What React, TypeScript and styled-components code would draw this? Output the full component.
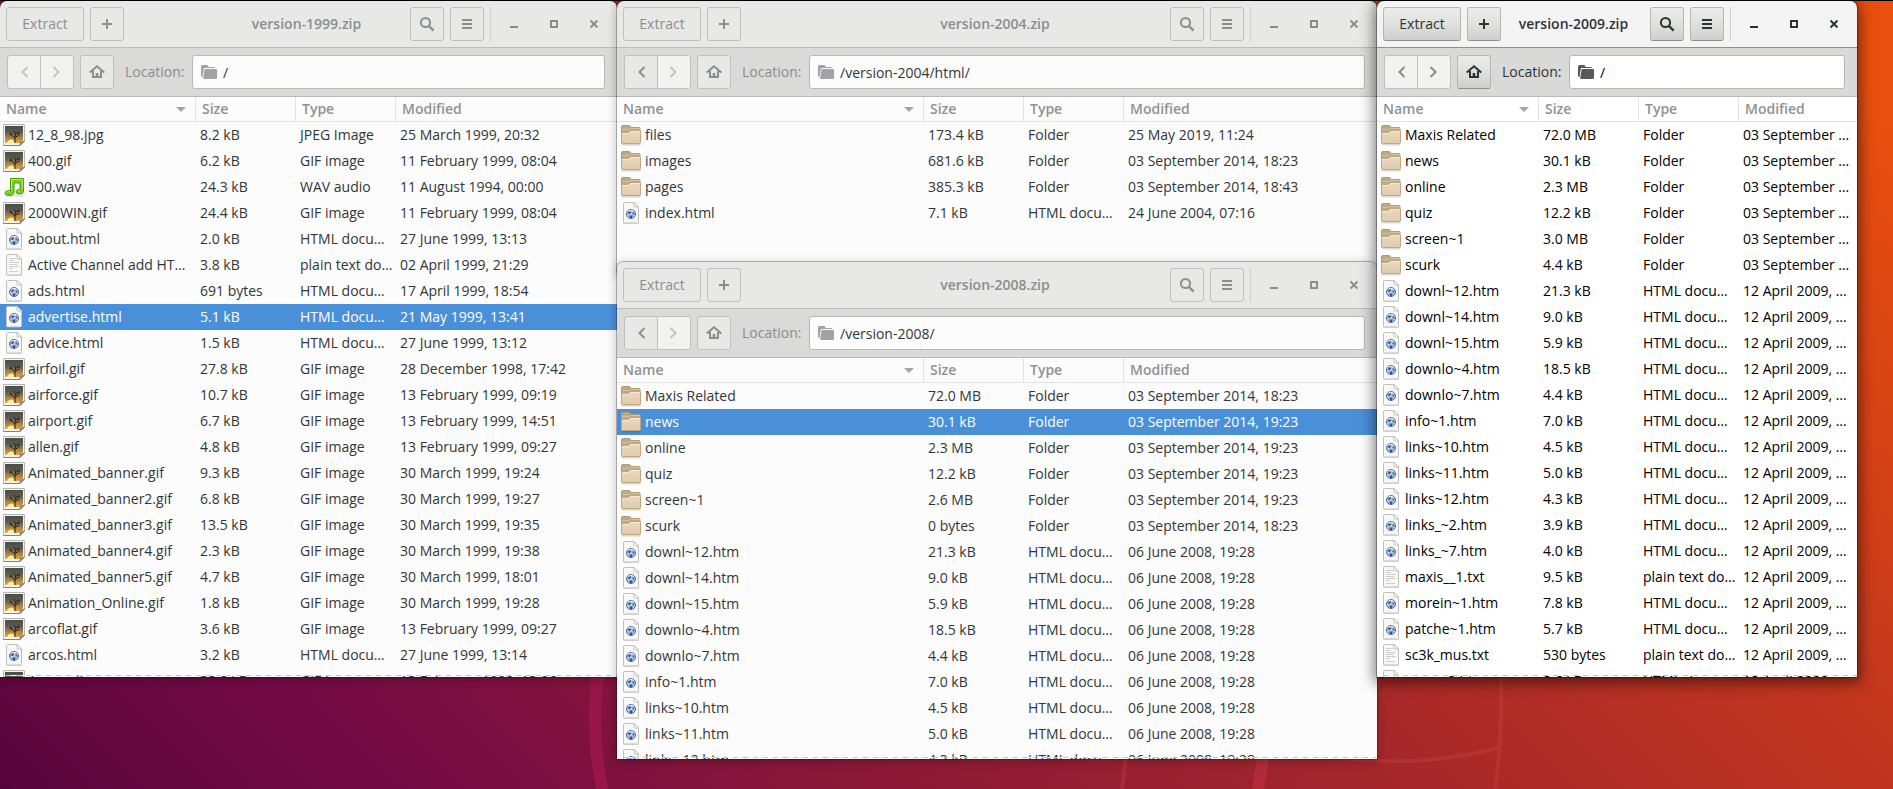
import React, { useId } from "react";
import styled, { createGlobalStyle, css } from "styled-components";

type FileKind = "folder" | "html" | "image" | "audio" | "text";
type FileRow = [FileKind, string, string, string, string];

const GlobalStyle = createGlobalStyle`
  * { box-sizing: border-box; }
  body {
    margin: 0;
    font-family: "Open Sans", "Noto Sans", sans-serif;
    font-size: 14px;
    line-height: 20px;
    overflow: hidden;
  }
  button, input { font: inherit; color: inherit; }
`;

/* ---------- desktop ---------- */

const Desktop = styled.main`
  position: relative;
  min-height: 100vh;
  overflow: hidden;
  border-top: 1px solid #000;
  display: grid;
  grid-template-columns: 617fr 760fr 480fr;
  align-items: start;
  padding-right: 36px;
  background: linear-gradient(
    45deg,
    #56053a 0%,
    #730a45 14%,
    #82133c 26%,
    #a3262c 51%,
    #be3420 70%,
    #d94414 85%,
    #e94f0f 96%
  );
`;

const Wallpaper = styled.svg`
  position: absolute;
  inset: 0;
  width: 100%;
  height: 100%;
`;

/* The later window of a stack lies over the foot of the one before it. */
const Stack = styled.div`
  display: flex;
  flex-direction: column;
  min-width: 0;
  & > * + * {
    margin-top: -10px;
  }
`;

/* ---------- window ---------- */

const Frame = styled.section<{ $active: boolean }>`
  position: relative;
  min-width: 0;
  border-radius: 7px 7px 0 0;
  color: ${(p) => (p.$active ? "#2e3436" : "#8b8e8f")};
  box-shadow: ${(p) =>
    p.$active
      ? "0 0 0 1px rgba(0,0,0,.3), 0 3px 14px 3px rgba(0,0,0,.5)"
      : "0 0 0 1px rgba(0,0,0,.25), 0 2px 8px 2px rgba(0,0,0,.2)"};
`;

const TitleBar = styled.header<{ $active: boolean }>`
  display: flex;
  align-items: center;
  padding: 6px;
  border-radius: 7px 7px 0 0;
  border-bottom: 1px solid ${(p) => (p.$active ? "#90918c" : "#bcbcb9")};
  background: ${(p) => (p.$active ? "#f4f4f4" : "#e8e8e7")};
`;

const BarGroup = styled.div<{ $end?: boolean }>`
  display: flex;
  flex: 1 0 0;
  min-width: max-content;
  gap: 6px;
  justify-content: ${(p) => (p.$end ? "flex-end" : "flex-start")};
`;

const Title = styled.h1`
  margin: 0;
  padding: 0 22px 0 18px;
  flex: 0 1 auto;
  display: flex;
  justify-content: center;
  min-width: 0;
  white-space: nowrap;
  font-size: 14px;
  font-weight: 600;
`;

const Divider = styled.span`
  width: 1px;
  background: #cfcfcd;
`;

const Button = styled.button<{ $active: boolean; $wide?: boolean }>`
  display: inline-flex;
  align-items: center;
  justify-content: center;
  width: ${(p) => (p.$wide ? "78px" : "34px")};
  height: 34px;
  padding: 0;
  border: 1px solid #bfbfbc;
  border-radius: 3px;
  background: #e8e8e7;
  ${(p) =>
    p.$active &&
    css`
      border-color: #b6b6b3 #b6b6b3 #91918c;
      background: linear-gradient(#ececeb, #e0e0de 50%, #cfcfcc);
    `}
  &:disabled {
    border-color: #bfbfbc;
    background: #f2f2f1;
    color: ${(p) => (p.$active ? "#8b8e8f" : "#c3c4c3")};
  }
`;

const FlatButton = styled.button`
  display: inline-flex;
  align-items: center;
  justify-content: center;
  width: 34px;
  height: 34px;
  padding: 0;
  border: 0;
  background: none;
`;

const LocationBar = styled.div<{ $active: boolean }>`
  display: flex;
  align-items: center;
  padding: 7px 12px 7px 7px;
  border-bottom: 1px solid #b9b9b6;
  background: ${(p) => (p.$active ? "#d9d9d7" : "#dadad8")};
`;

const Linked = styled.div`
  display: flex;
  margin-right: 6px;
  & > :first-child {
    border-radius: 3px 0 0 3px;
  }
  & > :last-child {
    margin-left: -1px;
    border-radius: 0 3px 3px 0;
  }
`;

const LocationLabel = styled.label`
  flex: none;
  width: 78px;
  padding-left: 11px;
`;

const Entry = styled.div`
  position: relative;
  flex: 1;
  min-width: 0;
  & > svg {
    position: absolute;
    left: 9px;
    top: 9px;
  }
`;

const EntryInput = styled.input<{ $active: boolean }>`
  display: block;
  width: 100%;
  height: 34px;
  padding: 0 8px 0 30px;
  border: 1px solid #b9b9b6;
  border-radius: 3px;
  outline: 0;
  background: ${(p) => (p.$active ? "#fff" : "#fcfcfc")};
  color: ${(p) => (p.$active ? "#000" : "#323636")};
`;

/* ---------- file list ---------- */

const ListView = styled.div<{ $active: boolean; $height: number }>`
  position: relative;
  height: ${(p) => p.$height}px;
  overflow: hidden;
  background: ${(p) => (p.$active ? "#fff" : "#fcfcfc")};
  color: ${(p) => (p.$active ? "#000" : "#323636")};
`;

const Undershoot = styled.div`
  position: absolute;
  left: 6px;
  right: 0;
  bottom: 1px;
  height: 1px;
  background: repeating-linear-gradient(90deg, #c4c4c8 0 5px, #fcfcfc 5px 10px);
`;

const Table = styled.table`
  width: 100%;
  table-layout: fixed;
  border-collapse: separate;
  border-spacing: 0;
`;

const NameCol = styled.col<{ $width: number }>`
  width: ${(p) => p.$width}px;
`;

const FixedCol = styled.col`
  width: 100px;
`;

const HeadCell = styled.th`
  height: 25px;
  padding: 0 6px;
  border-bottom: 1px solid #e3e3e2;
  text-align: left;
  font-weight: 600;
  color: #8f9292;
  white-space: nowrap;
  &:not(:last-child) {
    border-right: 1px solid #e3e3e2;
  }
`;

const SortHead = styled.span`
  display: flex;
  align-items: center;
  justify-content: space-between;
  padding-right: 3px;
`;

const Row = styled.tr<{ $selected: boolean }>`
  ${(p) =>
    p.$selected &&
    css`
      background: #4a90d9;
      color: #fff;
    `}
`;

const Cell = styled.td`
  height: 26px;
  padding: 0 0 0 4px;
  overflow: hidden;
  white-space: nowrap;
`;

const NameCell = styled(Cell)`
  padding-left: 3px;
`;

const FileName = styled.span`
  display: flex;
  align-items: center;
  gap: 3px;
  & > svg {
    flex: none;
  }
`;

/* ---------- symbolic icons ---------- */

const Symbol = ({ children }: { children: React.ReactNode }) => (
  <svg width="16" height="16" viewBox="0 0 16 16" fill="none" stroke="currentColor" strokeWidth="2" aria-hidden>
    {children}
  </svg>
);

const AddIcon = () => <Symbol><path d="M8 3v10M3 8h10" /></Symbol>;
const SearchIcon = () => (
  <Symbol><circle cx="6.5" cy="6.5" r="4.6" /><path d="M10 10l4.6 4.6" strokeWidth="2.4" /></Symbol>
);
const MenuIcon = () => <Symbol><path d="M3 4h10M3 8h10M3 12h10" /></Symbol>;
const MinimizeIcon = () => <Symbol><path d="M4 11h8" /></Symbol>;
const MaximizeIcon = () => <Symbol><path d="M5 5h6v6H5z" /></Symbol>;
const CloseIcon = () => <Symbol><path d="M4.5 4.5l7 7M11.5 4.5l-7 7" /></Symbol>;
const BackIcon = () => <Symbol><path d="M11.5 3L6.5 8l5 5" /></Symbol>;
const ForwardIcon = () => <Symbol><path d="M4.5 3l5 5-5 5" /></Symbol>;
const HomeIcon = () => (
  <Symbol>
    <path d="M.7 8.6L8 2.3l7.3 6.3" />
    <path d="M4 7v6h8V7" />
    <path d="M8 13.5V9" strokeWidth="2.6" />
  </Symbol>
);
const PlaceIcon = ({ active }: { active: boolean }) => (
  <svg width="16" height="16" viewBox="0 0 16 16" fill={active ? "#555b5c" : "#a0a2a3"} aria-hidden>
    <path d="M0 2.5Q0 1 1.5 1H6q1 0 1.2 1l.3 1H13q1 0 1 1H4Q3 4 2.8 5L1.5 13Q0 13 0 11.500z" />
    <path d="M4.500 5H15q1 0 1 1v7.500q0 1.500-1.500 1.500H3q-1 0-.8-1L3.500 6q.1-1 1-1z" />
  </svg>
);
const SortIcon = () => (
  <svg width="10" height="5" viewBox="0 0 10 5" fill="#a4a6a6" aria-hidden><path d="M0 0h10L5 5z" /></svg>
);

/* ---------- file type icons ---------- */

const FolderIcon = () => (
  <>
    <path d="M2 20.500h18.500" stroke="#000" strokeOpacity=".15" strokeWidth="2" />
    <path d="M1.500 19V3q0-1.500 1.500-1.500h6q1 0 1.300.8l.5 1.200H19q1 0 1 1V19z" fill="#bda983" stroke="#b49c72" />
    <path d="M2.500 5.500h6l2-1h9" stroke="#d3c4a3" fill="none" />
    <path d="M1.500 9.500q0-1 1-1h5q1 0 1.600-.8l.6-.6q.4-.6 1.300-.6h8.500q1 0 1 1v11q0 1-1 1h-17q-1 0-1-1z" fill="url(#folderFace)" stroke="#bfa67c" />
    <path d="M2.500 9.500h5.500q1 0 1.500-.8.600-1.200 1.600-1.200h8.400" stroke="#f6e9d7" fill="none" />
  </>
);

const Page = () => (
  <>
    <path d="M3.500 21.600h15.500" stroke="#000" strokeOpacity=".15" />
    <path d="M3.500 1.500q0-1 1-1H14l4.500 4.500v15q0 1-1 1h-13q-1 0-1-1z" fill="#f8f8f7" stroke="#bfc1bb" />
    <path d="M14 .5V4q0 1 1 1h3.500z" fill="#fff" stroke="#bfc1bb" />
  </>
);

const HtmlIcon = () => (
  <>
    <Page />
    <circle cx="11" cy="12" r="4.500" fill="#b9cbe6" stroke="#44669c" />
    <path d="M8 10.500l2.200-1.500 1 1.200-1.400 1.800-1.600-.2zM12.600 10l1.600 1v2l-1.600-1zM9.200 13.500h3.600l-1 2.500h-1.600z" fill="#30538d" />
    <path d="M8.500 9.200q2.500-2 5 0" stroke="#eef3fb" fill="none" />
  </>
);

const TextIcon = () => (
  <>
    <Page />
    <path
      d="M6 4.500h7M6 6.500h5M6 8.500h10M6 10.500h8M6 12.500h10M6 14.500h4M6 17.500h9"
      stroke="#cfd0cd"
      fill="none"
    />
  </>
);

const ImageIcon = () => (
  <>
    <path d="M.5 1q0-.5.5-.5h20q.5 0 .5.500v16l-4 4.500H1q-.5 0-.5-.5z" fill="#f4f4f2" stroke="#b4b6b0" />
    <path d="M2 2h18v14.500l-2.500 2.500H2z" fill="url(#dusk)" />
    <path d="M4 19a4 4 0 0 1 7-2l.5 2z" fill="#fff0a0" />
    <path d="M12 19v-5l-3.500-3-2-.5M9 11L7.500 8.500M12 14l.5-4-1.500-3M12.500 11l3-3.500M14 9h3M12.500 13l4-2" stroke="#1d1710" strokeWidth=".9" fill="none" />
    <path d="M16.500 21.500q1.500-1.500 1-3.500 2 .7 4-1z" fill="#d8dad5" stroke="#6d706a" />
    <path d="M.5 21.500h16" stroke="#80837e" />
  </>
);

const AudioIcon = () => (
  <>
    <path d="M3 19.500h17" stroke="#000" strokeOpacity=".12" strokeWidth="2" />
    <path
      d="M7.500 2.500h13V15q0 3-4 3-3.500 0-3.500-2.300t3.500-2.200H17V7h-6v9q0 3.500-4.500 3.500-4.500 0-4.500-2.400T6 14.500h1.500z"
      fill="#73d216"
      stroke="#4c9c0a"
    />
    <path d="M8.500 14.500v-11h11V13M3.500 17q.5-1.500 3-1.500M14.200 15.700q.4-1.200 2.500-1.200" stroke="#b4ee70" fill="none" />
  </>
);

const artwork: Record<FileKind, () => React.ReactElement> = {
  folder: FolderIcon,
  html: HtmlIcon,
  image: ImageIcon,
  audio: AudioIcon,
  text: TextIcon,
};

const FileIcon = ({ kind }: { kind: FileKind }) => {
  const Art = artwork[kind];
  return (
    <svg width="22" height="22" viewBox="0 0 22 22" aria-hidden>
      <Art />
    </svg>
  );
};

/* ---------- data ---------- */

const HTML = "HTML docu…";
const img = (n: string, s: string, d: string): FileRow => ["image", n, s, "GIF image", d];
const htm = (n: string, s: string, d: string): FileRow => ["html", n, s, HTML, d];
const txt = (n: string, s: string, d: string): FileRow => ["text", n, s, "plain text do…", d];
const dir = (n: string, s: string, d: string): FileRow => ["folder", n, s, "Folder", d];

const files1999: FileRow[] = [
  ["image", "12_8_98.jpg", "8.2 kB", "JPEG Image", "25 March 1999, 20:32"],
  img("400.gif", "6.2 kB", "11 February 1999, 08:04"),
  ["audio", "500.wav", "24.3 kB", "WAV audio", "11 August 1994, 00:00"],
  img("2000WIN.gif", "24.4 kB", "11 February 1999, 08:04"),
  htm("about.html", "2.0 kB", "27 June 1999, 13:13"),
  txt("Active Channel add HT…", "3.8 kB", "02 April 1999, 21:29"),
  htm("ads.html", "691 bytes", "17 April 1999, 18:54"),
  htm("advertise.html", "5.1 kB", "21 May 1999, 13:41"),
  htm("advice.html", "1.5 kB", "27 June 1999, 13:12"),
  img("airfoil.gif", "27.8 kB", "28 December 1998, 17:42"),
  img("airforce.gif", "10.7 kB", "13 February 1999, 09:19"),
  img("airport.gif", "6.7 kB", "13 February 1999, 14:51"),
  img("allen.gif", "4.8 kB", "13 February 1999, 09:27"),
  img("Animated_banner.gif", "9.3 kB", "30 March 1999, 19:24"),
  img("Animated_banner2.gif", "6.8 kB", "30 March 1999, 19:27"),
  img("Animated_banner3.gif", "13.5 kB", "30 March 1999, 19:35"),
  img("Animated_banner4.gif", "2.3 kB", "30 March 1999, 19:38"),
  img("Animated_banner5.gif", "4.7 kB", "30 March 1999, 18:01"),
  img("Animation_Online.gif", "1.8 kB", "30 March 1999, 19:28"),
  img("arcoflat.gif", "3.6 kB", "13 February 1999, 09:27"),
  htm("arcos.html", "3.2 kB", "27 June 1999, 13:14"),
  img("Arcos.gif", "38.8 kB", "13 February 1999, 13:06"),
];

const files2004: FileRow[] = [
  dir("files", "173.4 kB", "25 May 2019, 11:24"),
  dir("images", "681.6 kB", "03 September 2014, 18:23"),
  dir("pages", "385.3 kB", "03 September 2014, 18:43"),
  htm("index.html", "7.1 kB", "24 June 2004, 07:16"),
];

const JUNE = "06 June 2008, 19:28";
const files2008: FileRow[] = [
  dir("Maxis Related", "72.0 MB", "03 September 2014, 18:23"),
  dir("news", "30.1 kB", "03 September 2014, 19:23"),
  dir("online", "2.3 MB", "03 September 2014, 19:23"),
  dir("quiz", "12.2 kB", "03 September 2014, 19:23"),
  dir("screen~1", "2.6 MB", "03 September 2014, 19:23"),
  dir("scurk", "0 bytes", "03 September 2014, 18:23"),
  htm("downl~12.htm", "21.3 kB", JUNE),
  htm("downl~14.htm", "9.0 kB", JUNE),
  htm("downl~15.htm", "5.9 kB", JUNE),
  htm("downlo~4.htm", "18.5 kB", JUNE),
  htm("downlo~7.htm", "4.4 kB", JUNE),
  htm("info~1.htm", "7.0 kB", JUNE),
  htm("links~10.htm", "4.5 kB", JUNE),
  htm("links~11.htm", "5.0 kB", JUNE),
  htm("links~12.htm", "4.3 kB", JUNE),
];

const SEPT = "03 September …";
const APRIL = "12 April 2009, …";
const files2009: FileRow[] = [
  dir("Maxis Related", "72.0 MB", SEPT),
  dir("news", "30.1 kB", SEPT),
  dir("online", "2.3 MB", SEPT),
  dir("quiz", "12.2 kB", SEPT),
  dir("screen~1", "3.0 MB", SEPT),
  dir("scurk", "4.4 kB", SEPT),
  htm("downl~12.htm", "21.3 kB", APRIL),
  htm("downl~14.htm", "9.0 kB", APRIL),
  htm("downl~15.htm", "5.9 kB", APRIL),
  htm("downlo~4.htm", "18.5 kB", APRIL),
  htm("downlo~7.htm", "4.4 kB", APRIL),
  htm("info~1.htm", "7.0 kB", APRIL),
  htm("links~10.htm", "4.5 kB", APRIL),
  htm("links~11.htm", "5.0 kB", APRIL),
  htm("links~12.htm", "4.3 kB", APRIL),
  htm("links_~2.htm", "3.9 kB", APRIL),
  htm("links_~7.htm", "4.0 kB", APRIL),
  txt("maxis__1.txt", "9.5 kB", APRIL),
  htm("morein~1.htm", "7.8 kB", APRIL),
  htm("patche~1.htm", "5.7 kB", APRIL),
  txt("sc3k_mus.txt", "530 bytes", APRIL),
  htm("scree~2.htm", "8.6 kB", APRIL),
];

/* ---------- archive manager window ---------- */

interface ArchiveProps {
  title: string;
  path: string;
  files: FileRow[];
  nameWidth: number;
  listHeight: number;
  active?: boolean;
  canGoBack?: boolean;
  selected?: string;
  scrollable?: boolean;
}

function ArchiveWindow({
  title,
  path,
  files,
  nameWidth,
  listHeight,
  active = false,
  canGoBack = false,
  selected,
  scrollable = true,
}: ArchiveProps) {
  const id = useId();
  return (
    <Frame $active={active} aria-label={title}>
      <TitleBar $active={active}>
        <BarGroup>
          <Button $active={active} $wide>Extract</Button>
          <Button $active={active} aria-label="Add files"><AddIcon /></Button>
        </BarGroup>
        <Title>{title}</Title>
        <BarGroup $end>
          <Button $active={active} aria-label="Search"><SearchIcon /></Button>
          <Button $active={active} aria-label="Menu"><MenuIcon /></Button>
          <Divider />
          <FlatButton aria-label="Minimize"><MinimizeIcon /></FlatButton>
          <FlatButton aria-label="Maximize"><MaximizeIcon /></FlatButton>
          <FlatButton aria-label="Close"><CloseIcon /></FlatButton>
        </BarGroup>
      </TitleBar>
      <LocationBar $active={active}>
        <Linked>
          <Button $active={active} disabled={!canGoBack} aria-label="Back"><BackIcon /></Button>
          <Button $active={active} disabled aria-label="Forward"><ForwardIcon /></Button>
        </Linked>
        <Button $active={active} aria-label="Home"><HomeIcon /></Button>
        <LocationLabel htmlFor={id}>Location:</LocationLabel>
        <Entry>
          <EntryInput id={id} $active={active} defaultValue={path} />
          <PlaceIcon active={active} />
        </Entry>
      </LocationBar>
      <ListView $active={active} $height={listHeight}>
        <Table>
          <colgroup>
            <NameCol $width={nameWidth} />
            <FixedCol />
            <FixedCol />
            <col />
          </colgroup>
          <thead>
            <tr>
              <HeadCell scope="col"><SortHead>Name<SortIcon /></SortHead></HeadCell>
              <HeadCell scope="col">Size</HeadCell>
              <HeadCell scope="col">Type</HeadCell>
              <HeadCell scope="col">Modified</HeadCell>
            </tr>
          </thead>
          <tbody>
            {files.map(([kind, name, size, type, modified]) => (
              <Row key={name} $selected={name === selected}>
                <NameCell><FileName><FileIcon kind={kind} />{name}</FileName></NameCell>
                <Cell>{size}</Cell>
                <Cell>{type}</Cell>
                <Cell>{modified}</Cell>
              </Row>
            ))}
          </tbody>
        </Table>
        {scrollable && <Undershoot />}
      </ListView>
    </Frame>
  );
}

export default function App() {
  return (
    <>
      <GlobalStyle />
      <Desktop>
        <Wallpaper viewBox="0 0 1893 788" preserveAspectRatio="xMidYMax slice" fill="none" aria-hidden>
          <defs>
            <linearGradient id="ring" x1="0" x2="1" y1="0" y2="0">
              <stop offset="0" stopColor="#971548" />
              <stop offset="1" stopColor="#b32b39" />
            </linearGradient>
            <linearGradient id="folderFace" x1="0" x2="0" y1="0" y2="1">
              <stop offset="0" stopColor="#ead8c0" />
              <stop offset="1" stopColor="#e0cbad" />
            </linearGradient>
            <linearGradient id="dusk" x1="0" x2="0" y1="0" y2="1">
              <stop offset="0" stopColor="#4b4d4a" />
              <stop offset=".35" stopColor="#5a5a50" />
              <stop offset=".6" stopColor="#94794a" />
              <stop offset="1" stopColor="#eda338" />
            </linearGradient>
          </defs>
          <circle cx="930" cy="719" r="335" stroke="url(#ring)" strokeWidth="12" />
          <g stroke="#cc4444" strokeOpacity=".3" strokeWidth="4">
            <path d="M1500 640Q1504 730 1495 788" />
            <path d="M1340 756Q1410 768 1499 747" />
            <path d="M1128 740L1122 788" />
          </g>
        </Wallpaper>
        <ArchiveWindow
          title="version-1999.zip" path="/" files={files1999}
          nameWidth={196} listHeight={580} selected="advertise.html"
        />
        <Stack>
          <ArchiveWindow
            title="version-2004.zip" path="/version-2004/html/" files={files2004}
            nameWidth={307} listHeight={175} canGoBack scrollable={false}
          />
          <ArchiveWindow
            title="version-2008.zip" path="/version-2008/" files={files2008}
            nameWidth={307} listHeight={401} canGoBack selected="news"
          />
        </Stack>
        <ArchiveWindow
          title="version-2009.zip" path="/" files={files2009}
          nameWidth={162} listHeight={580} active
        />
      </Desktop>
    </>
  );
}
